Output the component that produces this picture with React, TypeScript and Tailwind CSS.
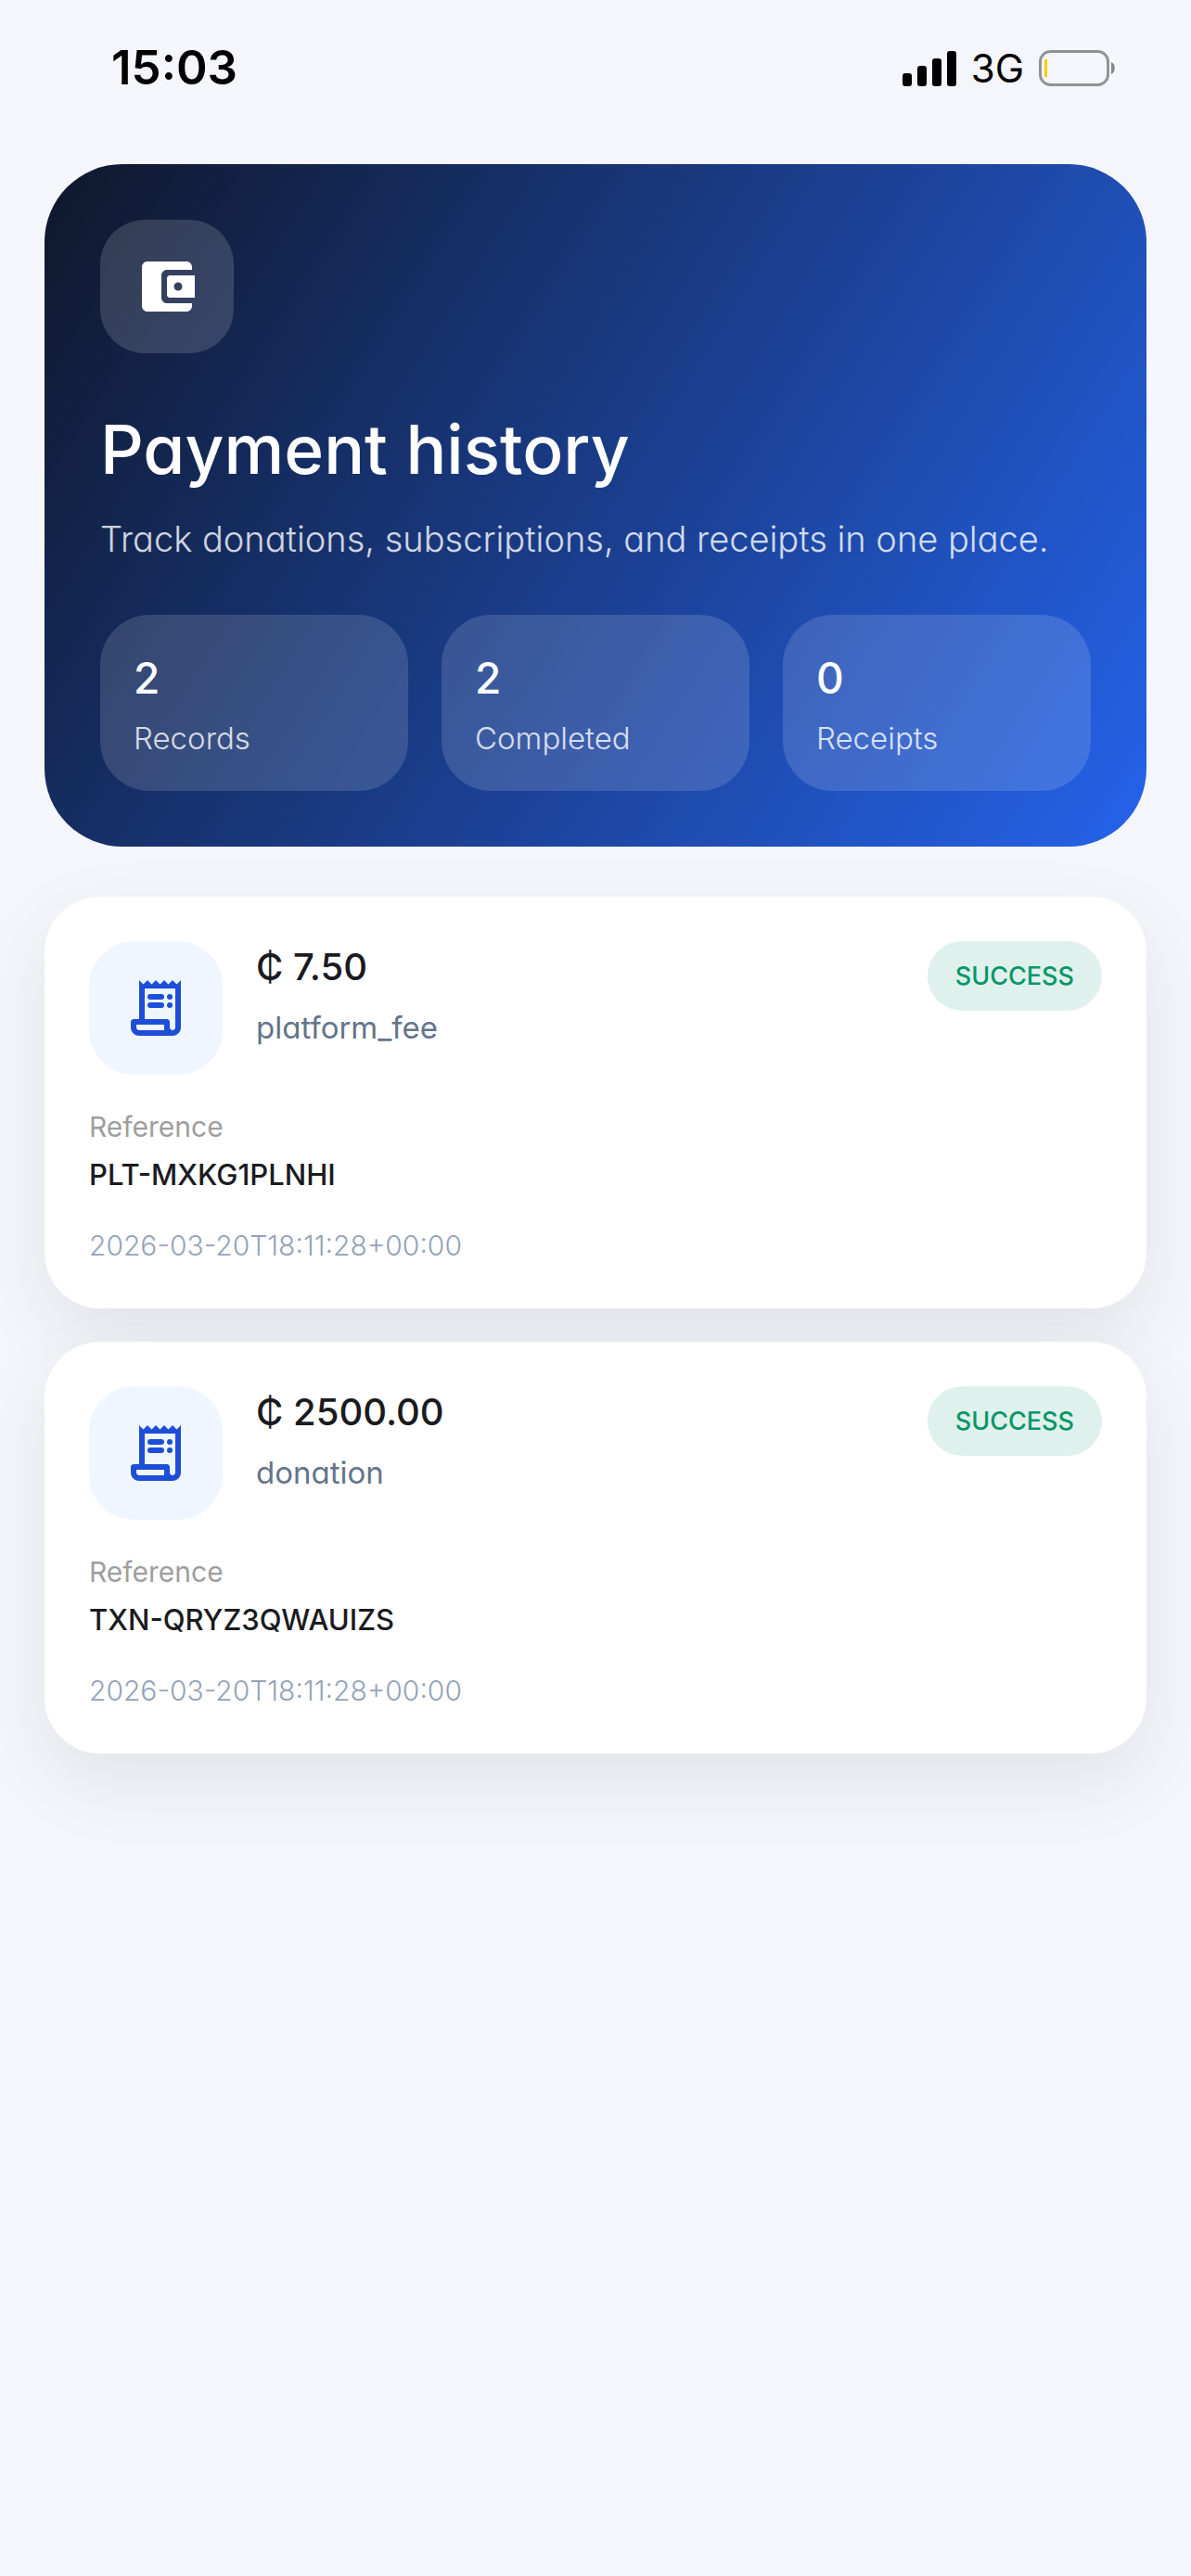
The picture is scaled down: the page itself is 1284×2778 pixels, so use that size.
type Payment = {
  amount: string;
  type: string;
  status: string;
  reference: string;
  date: string;
};

const STATS = [
  { label: "Records", value: 2 },
  { label: "Completed", value: 2 },
  { label: "Receipts", value: 0 },
];

const PAYMENTS: Payment[] = [
  {
    amount: "₵ 7.50",
    type: "platform_fee",
    status: "SUCCESS",
    reference: "PLT-MXKG1PLNHI",
    date: "2026-03-20T18:11:28+00:00",
  },
  {
    amount: "₵ 2500.00",
    type: "donation",
    status: "SUCCESS",
    reference: "TXN-QRYZ3QWAUIZS",
    date: "2026-03-20T18:11:28+00:00",
  },
];

function WalletIcon() {
  return (
    <svg viewBox="0 0 24 24" className="size-18 fill-white" aria-hidden="true">
      <path d="M10 16V8c0-1.1.89-2 2-2h9V5c0-1.1-.9-2-2-2H5c-1.11 0-2 .9-2 2v14c0 1.1.89 2 2 2h14c1.1 0 2-.9 2-2v-1h-9c-1.11 0-2-.9-2-2zm3-8c-.55 0-1 .45-1 1v6c0 .55.45 1 1 1h9V8h-9zm3 5.5c-.83 0-1.5-.67-1.5-1.5s.67-1.5 1.5-1.5 1.5.67 1.5 1.5-.67 1.5-1.5 1.5z" />
    </svg>
  );
}

function ReceiptIcon() {
  return (
    <svg viewBox="0 0 24 24" className="size-18 fill-[#1d4ed8]" aria-hidden="true">
      <path
        fillRule="evenodd"
        d="M19.5 3.5 18 2l-1.5 1.5L15 2l-1.5 1.5L12 2l-1.5 1.5L9 2 7.5 3.5 6 2v14H4c-.55 0-1 .45-1 1v2c0 1.66 1.34 3 3 3h12c1.66 0 3-1.34 3-3V2l-1.5 1.5zM15 20H6c-.55 0-1-.45-1-1v-1h10v2zm4-1c0 .55-.45 1-1 1s-1-.45-1-1v-2c0-.55-.45-1-1-1H8V5h11v14z"
      />
      <rect x="9" y="7" width="6" height="2" rx="1" />
      <rect x="9" y="10" width="6" height="2" rx="1" />
      <circle cx="17" cy="8" r="1" />
      <circle cx="17" cy="11" r="1" />
    </svg>
  );
}

function StatusBar() {
  return (
    <header className="flex h-[147px] items-center justify-between pr-20 pl-30 text-black">
      <time className="text-[51px] font-semibold">15:03</time>
      <div className="flex items-center gap-4">
        <svg viewBox="0 0 58 38" className="h-[38px] w-[58px] fill-black" aria-label="Signal">
          <rect x="0" y="24" width="10" height="14" rx="3" />
          <rect x="16" y="16" width="10" height="22" rx="3" />
          <rect x="32" y="8" width="10" height="30" rx="3" />
          <rect x="48" y="0" width="10" height="38" rx="3" />
        </svg>
        <span className="text-[42px]">3G</span>
        <svg viewBox="0 0 84 40" className="h-10 w-21" aria-label="Battery">
          <rect x="1.5" y="1.5" width="73" height="36" rx="11" fill="none" stroke="#929296" strokeWidth="3" />
          <rect x="6" y="10" width="3" height="19" fill="#ffcc00" />
          <path d="M78 13c5 2 5 11 0 13z" fill="#86868a" />
        </svg>
      </div>
    </header>
  );
}

function Hero() {
  return (
    <section className="rounded-[84px] bg-[linear-gradient(122deg,#0f172a,#2563eb)] p-15 text-white">
      <div className="flex size-36 items-center justify-center rounded-[48px] bg-white/15">
        <WalletIcon />
      </div>
      <h1 className="mt-14 text-[73px] leading-24 font-medium">Payment history</h1>
      <p className="mt-5 text-[38px] leading-14 font-light text-white/80">
        Track donations, subscriptions, and receipts in one place.
      </p>
      <dl className="mt-[54px] grid grid-cols-3 gap-9">
        {STATS.map((s) => (
          <div key={s.label} className="flex flex-col-reverse gap-3 rounded-[54px] bg-white/14 p-9">
            <dt className="text-[33px] leading-[42px] font-light text-white/80">{s.label}</dt>
            <dd className="text-[46px] leading-16 font-medium">{s.value}</dd>
          </div>
        ))}
      </dl>
    </section>
  );
}

function PaymentCard({ payment }: { payment: Payment }) {
  return (
    <article className="rounded-[60px] bg-white p-12 shadow-[0_30px_84px_rgba(0,0,0,0.08)]">
      <div className="flex items-start gap-9">
        <div className="flex size-36 items-center justify-center rounded-[48px] bg-[#eff6ff]">
          <ReceiptIcon />
        </div>
        <div className="flex-1">
          <h2 className="text-[40px] leading-14 font-medium text-[#1b1b1f]">{payment.amount}</h2>
          <p className="mt-4 text-[33px] leading-[42px] text-[#64748b]">{payment.type}</p>
        </div>
        <span className="rounded-full bg-[#dff1ec] px-[30px] py-4 text-[27px] leading-[43px] font-medium text-[#059669]">
          {payment.status}
        </span>
      </div>
      <p className="mt-9 text-[30px] leading-10 text-[#9e9e9e]">Reference</p>
      <p className="mt-2 text-[31px] leading-12 font-medium text-[#1b1b1f]">{payment.reference}</p>
      <p className="mt-8 text-[30px] leading-10 font-light text-[#94a3b8]">{payment.date}</p>
    </article>
  );
}

export default function App() {
  return (
    <div className="min-h-screen bg-[#f5f6fb] font-['Inter','Noto_Sans',sans-serif] [font-feature-settings:'cv11']">
      <StatusBar />
      <main className="px-12 pt-[30px] pb-12">
        <Hero />
        <div className="mt-[54px] flex flex-col gap-9">
          {PAYMENTS.map((p) => (
            <PaymentCard key={p.reference} payment={p} />
          ))}
        </div>
      </main>
    </div>
  );
}
